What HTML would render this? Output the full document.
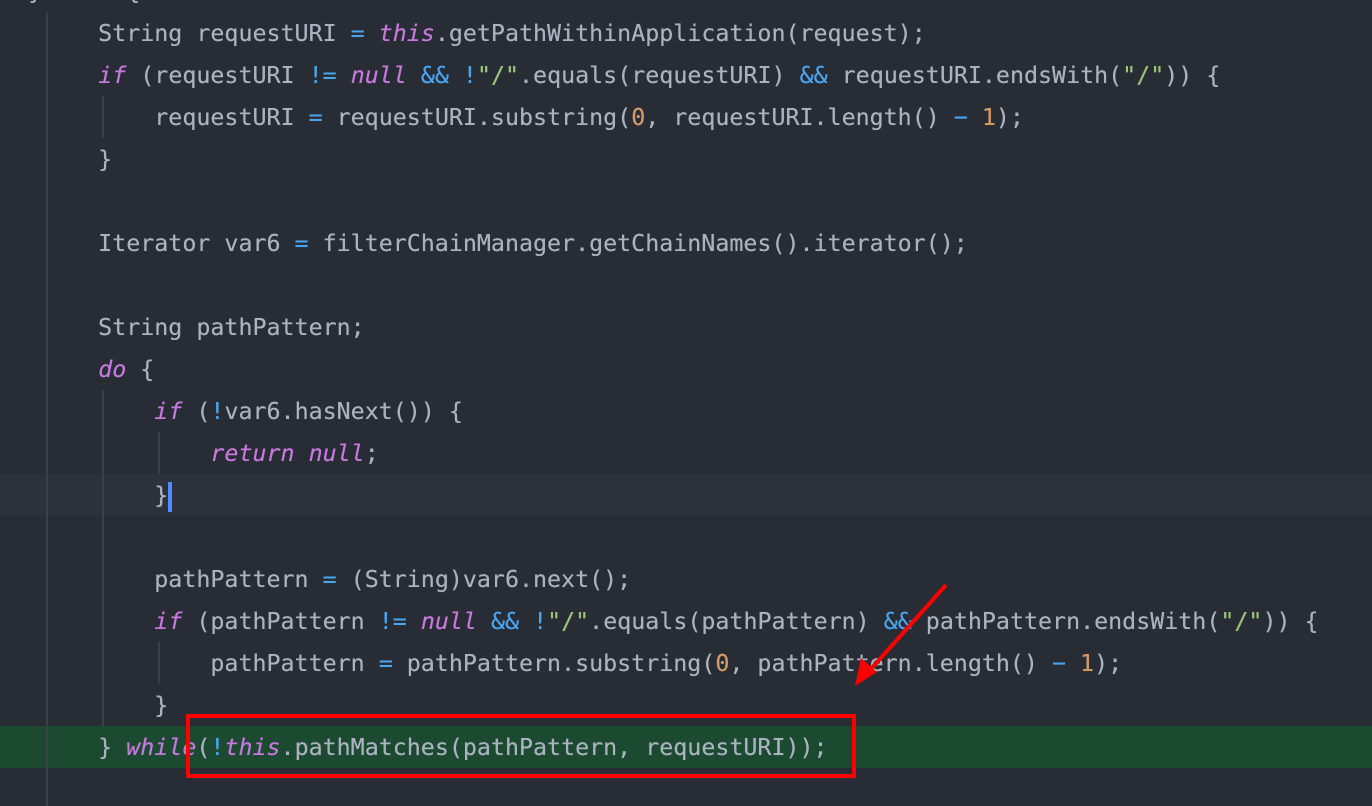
<!DOCTYPE html>
<html><head><style>
body{margin:0;width:1372px;height:806px;background:#282c34;overflow:hidden;position:relative;font-family:"DejaVu Sans Mono","Liberation Mono",monospace;font-size:23.3px;color:#abb2bf}
.l{position:absolute;left:0;width:1372px;height:42px;line-height:44px;white-space:pre;text-shadow:0 0 0.4px currentColor}
.k{color:#c678dd;font-style:italic}
.o{color:#4aa5f0}
.s{color:#98c379}
.n{color:#d19a66}
.g{position:absolute;width:2px;background:#3b4048}
</style></head><body>
<div style="position:absolute;top:474px;left:0;width:1372px;height:42px;background:#2c313c"></div>
<div style="position:absolute;top:726px;left:0;width:1372px;height:42px;background:#1b4a31"></div>
<div class="g" style="left:46px;top:12px;height:794px"></div>
<div class="g" style="left:102px;top:96px;height:42px"></div>
<div class="g" style="left:102px;top:390px;height:336px"></div>
<div class="g" style="left:158px;top:432px;height:42px"></div>
<div class="g" style="left:158px;top:642px;height:42px"></div>
<div class="l" style="top:-30px">  } <span class="k">else</span> {</div>
<div class="l" style="top:12px">       String requestURI <span class="o">=</span> <span class="k">this</span>.getPathWithinApplication(request);</div>
<div class="l" style="top:54px">       <span class="k">if</span> (requestURI <span class="o">!=</span> <span class="k">null</span> <span class="o">&amp;&amp;</span> <span class="o">!</span><span class="s">"/"</span>.equals(requestURI) <span class="o">&amp;&amp;</span> requestURI.endsWith(<span class="s">"/"</span>)) {</div>
<div class="l" style="top:96px">           requestURI <span class="o">=</span> requestURI.substring(<span class="n">0</span>, requestURI.length() <span class="o">−</span> <span class="n">1</span>);</div>
<div class="l" style="top:138px">       }</div>
<div class="l" style="top:222px">       Iterator var6 <span class="o">=</span> filterChainManager.getChainNames().iterator();</div>
<div class="l" style="top:306px">       String pathPattern;</div>
<div class="l" style="top:348px">       <span class="k">do</span> {</div>
<div class="l" style="top:390px">           <span class="k">if</span> (<span class="o">!</span>var6.hasNext()) {</div>
<div class="l" style="top:432px">               <span class="k">return</span> <span class="k">null</span>;</div>
<div class="l" style="top:474px">           }<span style="display:inline-block;width:4px;height:30px;background:#528bff;vertical-align:middle"></span></div>
<div class="l" style="top:558px">           pathPattern <span class="o">=</span> (String)var6.next();</div>
<div class="l" style="top:600px">           <span class="k">if</span> (pathPattern <span class="o">!=</span> <span class="k">null</span> <span class="o">&amp;&amp;</span> <span class="o">!</span><span class="s">"/"</span>.equals(pathPattern) <span class="o">&amp;&amp;</span> pathPattern.endsWith(<span class="s">"/"</span>)) {</div>
<div class="l" style="top:642px">               pathPattern <span class="o">=</span> pathPattern.substring(<span class="n">0</span>, pathPattern.length() <span class="o">−</span> <span class="n">1</span>);</div>
<div class="l" style="top:684px">           }</div>
<div class="l" style="top:726px">       } <span class="k">while</span>(<span class="o">!</span><span class="k">this</span>.pathMatches(pathPattern, requestURI));</div>
<div style="position:absolute;left:186px;top:714px;width:662px;height:56px;border:4px solid #ff0000"></div>
<svg style="position:absolute;left:0;top:0" width="1372" height="806">
<line x1="946" y1="585" x2="870" y2="670" stroke="#ff0000" stroke-width="4"/>
<polygon points="855,686 861,658 877,672" fill="#ff0000"/>
</svg>
</body></html>
